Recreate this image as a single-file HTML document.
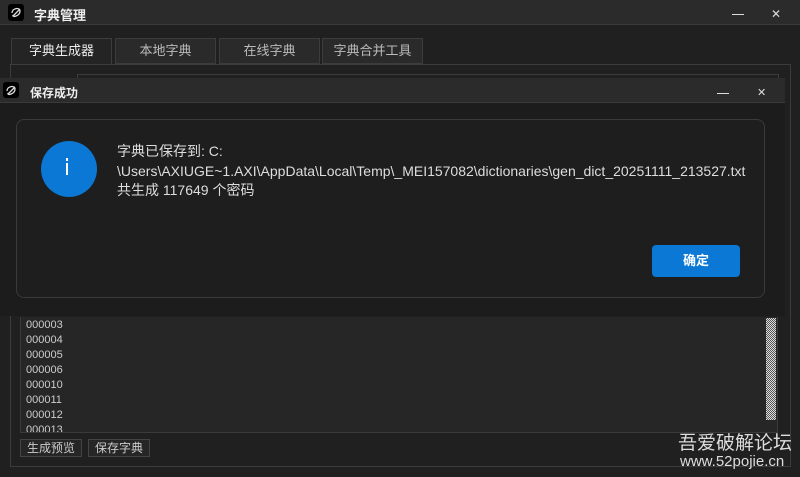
<!DOCTYPE html>
<html><head><meta charset="utf-8"><style>
*{margin:0;padding:0;box-sizing:border-box}
body{width:800px;height:477px;overflow:hidden;background:#202020;font-family:"Liberation Sans","Noto Sans CJK SC",sans-serif;color:#ddd;position:relative}
.abs{position:absolute}
.logo{background:#000;border-radius:3px}
.tab{position:absolute;top:38px;height:26px;border:1px solid #3c3c3c;background:#2a2a2a;color:#bbb;font-size:13px;text-align:center;line-height:24px}
.btn{position:absolute;top:439px;height:18px;border:1px solid #444;background:#262626;color:#ccc;font-size:12px;line-height:16px;padding:0 6px}
.num{font-size:11px;color:#ccc;line-height:15px}
</style></head><body>
<div class="abs" style="left:0;top:0;width:800px;height:25px;background:#2b2b2b;border-bottom:1px solid #3a3a3a"></div>
<div class="abs logo" style="left:8px;top:4px;width:16px;height:17px"><svg width="16" height="17"><path d="M5 12 L12 5 M4 9 C4 4 12 3 12 7 C12 12 4 14 5 11" stroke="#ddd" fill="none" stroke-width="1.3"/></svg></div>
<div class="abs" style="left:34px;top:5px;font-size:13px;font-weight:bold;color:#eee">字典管理</div>
<div class="abs" style="left:732px;top:14px;width:12px;height:1px;background:#ddd"></div>
<div class="abs" style="left:771px;top:7px;font-size:12px;color:#ddd">✕</div>
<div class="tab" style="left:11px;width:101px;color:#eee;background:#242424;height:27px">字典生成器</div>
<div class="tab" style="left:115px;width:101px">本地字典</div>
<div class="tab" style="left:219px;width:101px">在线字典</div>
<div class="tab" style="left:322px;width:101px">字典合并工具</div>
<div class="abs" style="left:10px;top:64px;width:781px;height:403px;border:1px solid #3c3c3c"></div>
<div class="abs" style="left:77px;top:74px;width:702px;height:6px;border:1px solid #3c3c3c;border-bottom:none"></div>
<div class="abs" style="left:20px;top:317px;width:758px;height:116px;background:#262626;border:1px solid #3a3a3a;border-top:none"></div>
<div class="abs" style="left:766px;top:318px;width:10px;height:102px;background:repeating-conic-gradient(#ddd 0 25%,#555 0 50%) 0 0/2px 2px"></div>
<div class="abs" style="left:26px;top:318px;height:114px;overflow:hidden">
<div class="num">000003</div><div class="num">000004</div><div class="num">000005</div><div class="num">000006</div><div class="num">000010</div><div class="num">000011</div><div class="num">000012</div><div class="num">000013</div></div>
<div class="btn" style="left:20px">生成预览</div>
<div class="btn" style="left:88px">保存字典</div>
<div class="abs" style="left:678px;top:428px;font-size:19px;color:#ddd">吾爱破解论坛</div>
<div class="abs" style="left:680px;top:453px;font-size:15px;color:#ddd">www.52pojie.cn</div>

<div class="abs" style="left:0;top:78px;width:785px;height:238px;background:#1c1c1c"></div>
<div class="abs" style="left:0;top:78px;width:785px;height:25px;background:#2b2b2b;border-bottom:1px solid #3a3a3a"></div>
<div class="abs logo" style="left:3px;top:82px;width:16px;height:16px"><svg width="16" height="16"><path d="M5 12 L12 5 M4 9 C4 4 12 3 12 7 C12 12 4 14 5 11" stroke="#ddd" fill="none" stroke-width="1.3"/></svg></div>
<div class="abs" style="left:30px;top:84px;font-size:12px;font-weight:bold;color:#eee">保存成功</div>
<div class="abs" style="left:717px;top:93px;width:12px;height:1px;background:#ddd"></div>
<div class="abs" style="left:757px;top:86px;font-size:11px;color:#ddd">✕</div>
<div class="abs" style="left:16px;top:119px;width:749px;height:179px;border:1px solid #3a3a3a;border-radius:8px;background:#1e1e1e"></div>
<div class="abs" style="left:41px;top:141px;width:56px;height:56px;border-radius:50%;background:#0a78d4"></div>
<div class="abs" style="left:66px;top:158px;width:2px;height:3px;background:#fff"></div>
<div class="abs" style="left:66px;top:163px;width:2px;height:12px;background:#fff"></div>
<div class="abs" style="left:117px;top:142px;font-size:14px;line-height:19.5px;color:#ddd;white-space:nowrap">字典已保存到: C:<br>\Users\AXIUGE~1.AXI\AppData\Local\Temp\_MEI157082\dictionaries\gen_dict_20251111_213527.txt<br>共生成 117649 个密码</div>
<div class="abs" style="left:652px;top:245px;width:88px;height:32px;border-radius:4px;background:#0a78d4;color:#fff;font-size:13px;font-weight:bold;text-align:center;line-height:32px">确定</div>
</body></html>
